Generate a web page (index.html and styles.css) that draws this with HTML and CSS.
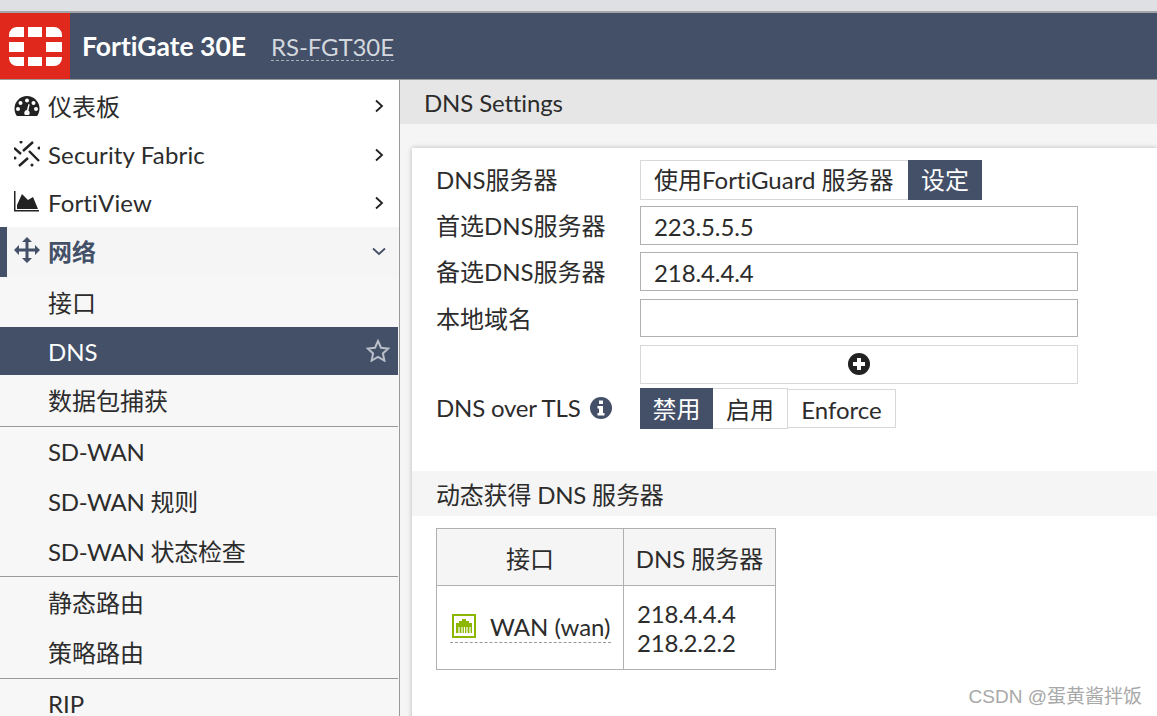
FILE: index.html
```html
<!DOCTYPE html>
<html lang="zh-CN">
<head>
  <meta charset="UTF-8" />
  <title>FortiGate 30E - DNS Settings</title>
  <link rel="stylesheet" href="styles.css">
</head>
<body>
  <div class="top-strip"></div>

  <!-- Header -->
  <header class="header">
    <div class="logo">
      <svg width="54" height="39" viewBox="0 0 54 39">
        <path fill="#fff" d="M1 10V8a8 8 0 0 1 8-8h7v10zM20 0h14v10H20zM38 0h8a8 8 0 0 1 8 8v2H38zM1 15h15v10H1zM38 15h16v10H38zM1 30h15v9H9a8 8 0 0 1-8-8zM20 30h14v9H20zM38 30h16v1a8 8 0 0 1-8 8h-8z"/>
      </svg>
    </div>
    <span class="device-name">FortiGate 30E</span>
    <span class="host-name">RS-FGT30E</span>
  </header>

  <div class="layout">
    <!-- Sidebar -->
    <nav class="sidebar">
      <div class="nav-top">
        <a class="nav-item">
          <svg class="nav-icon" viewBox="0 0 26 22">
            <path fill="#222" fill-rule="evenodd" d="M13 1a12.500 12.500 0 0 0-12.500 12.500c0 2.700.8 5 2 7 .3.400.7.500 1.100.500h18.800c.4 0 .8-.1 1.100-.5 1.200-2 2-4.300 2-7A12.500 12.500 0 0 0 13 1zM13 3.500a2 2 0 1 1 0 4 2 2 0 0 1 0-4zM6.500 6a2 2 0 1 1 0 4 2 2 0 0 1 0-4zM19.500 6a2 2 0 1 1 0 4 2 2 0 0 1 0-4zM4 12a2 2 0 1 1 0 4 2 2 0 0 1 0-4zM22 12a2 2 0 1 1 0 4 2 2 0 0 1 0-4zM14.500 9l1.200.4-1.300 6.200a3 3 0 0 1 1.300 2.400c0 .7-.3 1.400-.7 2h-4a3 3 0 0 1 1.900-5z"/>
          </svg>
          <span>仪表板</span>
          <svg class="chevron" viewBox="0 0 10 14"><path d="M2 1.500 8 7l-6 5.500"/></svg>
        </a>
        <a class="nav-item">
          <svg class="nav-icon" viewBox="4 3 26 26">
            <path stroke="#222" stroke-width="2.400" fill="none" d="M13 13 23 4M4 10l7 6M19 13l10 10M9 28l9-8"/>
            <g fill="#222">
              <circle cx="11" cy="4" r="1.500"/>
              <circle cx="29" cy="10" r="1.500"/>
              <circle cx="5" cy="20" r="1.500"/>
              <circle cx="22" cy="27" r="1.500"/>
            </g>
          </svg>
          <span class="wide-text">Security Fabric</span>
          <svg class="chevron" viewBox="0 0 10 14"><path d="M2 1.500 8 7l-6 5.500"/></svg>
        </a>
        <a class="nav-item">
          <svg class="nav-icon" viewBox="0 0 26 22">
            <path fill="#222" d="M0 0h1.500v19H25v1.500H0z"/>
            <path fill="#222" d="M3 18v-4L8 3l6 6 5-3 5 12z"/>
          </svg>
          <span class="wide-text">FortiView</span>
          <svg class="chevron" viewBox="0 0 10 14"><path d="M2 1.500 8 7l-6 5.500"/></svg>
        </a>
      </div>

      <div class="nav-rest">
        <a class="nav-item nav-open">
          <svg class="nav-icon" viewBox="0 0 26 26">
            <path fill="#435068" d="M13 0l5 5h-3.500v6.500H21V8l5 5-5 5v-3.500h-6.500V21H18l-5 5-5-5h3.500v-6.500H5V18l-5-5 5-5v3.500h6.500V5H8z"/>
          </svg>
          <span>网络</span>
          <svg class="chevron chevron-down" viewBox="0 0 14 9"><path d="M1 1.500 7 7l6-5.500"/></svg>
        </a>

        <div class="nav-group nav-group-first">
          <a class="nav-sub">接口</a>
          <a class="nav-sub nav-active">
            <span>DNS</span>
            <svg class="star" viewBox="0 0 24 23"><path d="M12 2l3 6.700 7.300.8-5.400 4.900 1.500 7.200L12 17.900l-6.400 3.700 1.500-7.200L1.700 9.500 9 8.700z"/></svg>
          </a>
          <a class="nav-sub">数据包捕获</a>
        </div>
        <div class="nav-group">
          <a class="nav-sub"><span class="tight-text">SD-WAN</span></a>
          <a class="nav-sub nav-sub-short"><span class="tight-text">SD-WAN 规则</span></a>
          <a class="nav-sub"><span class="tight-text">SD-WAN 状态检查</span></a>
        </div>
        <div class="nav-group nav-group-pad">
          <a class="nav-sub">静态路由</a>
          <a class="nav-sub">策略路由</a>
        </div>
        <div class="nav-group">
          <a class="nav-sub">RIP</a>
        </div>
      </div>
    </nav>

    <!-- Main -->
    <main class="main">
      <div class="page-title">DNS Settings</div>
      <div class="card">
        <div class="form">
          <label class="form-label">DNS服务器</label>
          <div class="btn-group">
            <span class="btn-option">使用FortiGuard 服务器</span>
            <span class="btn-selected">设定</span>
          </div>

          <label class="form-label">首选DNS服务器</label>
          <div class="text-field">223.5.5.5</div>

          <label class="form-label">备选DNS服务器</label>
          <div class="text-field">218.4.4.4</div>

          <label class="form-label">本地域名</label>
          <div class="text-field text-field-short"></div>

          <div></div>
          <div class="add-row">
            <svg width="22" height="22" viewBox="0 0 22 22">
              <circle cx="11" cy="11" r="11" fill="#222"/>
              <path fill="#fff" d="M9 5h4v4h4v4h-4v4H9v-4H5V9h4z"/>
            </svg>
          </div>

          <label class="form-label tls-label">DNS over TLS
            <svg class="info-icon" width="22" height="22" viewBox="0 0 22 22">
              <circle cx="11" cy="11" r="11" fill="#435068"/>
              <path fill="#fff" d="M9 3.500h4v3.500H9zM7.500 9H13v7h1.500v2.500h-7V16H9v-4.500H7.500z"/>
            </svg>
          </label>
          <div class="toggle-group">
            <span class="toggle toggle-on">禁用</span>
            <span class="toggle toggle-mid">启用</span>
            <span class="toggle toggle-end">Enforce</span>
          </div>
        </div>

        <div class="section-title">动态获得 DNS 服务器</div>

        <table class="dns-table">
          <thead>
            <tr>
              <th class="col-iface">接口</th>
              <th class="col-dns">DNS 服务器</th>
            </tr>
          </thead>
          <tbody>
            <tr>
              <td>
                <span class="iface-link">
                  <svg class="port-icon" width="24" height="24" viewBox="0 0 24 24">
                    <rect x="1" y="1" width="22" height="22" fill="#fff" stroke="#8db600" stroke-width="2"/>
                    <path fill="#8db600" d="M4 19V9h3V7h3V5h4v2h3v2h3v10z"/>
                    <path stroke="#fff" stroke-width="1.200" d="M7 13v6M10 13v6M12.500 13v6M15 13v6M18 13v6"/>
                  </svg>
                  WAN (wan)
                </span>
              </td>
              <td class="dns-values">218.4.4.4<br>218.2.2.2</td>
            </tr>
          </tbody>
        </table>
      </div>
    </main>
  </div>

  <div class="watermark">CSDN @蛋黄酱拌饭</div>
</body>
</html>
```

FILE: styles.css
```css
* {
  box-sizing: border-box;
}

html, body {
  height: 716px;
  overflow: hidden;
}

body {
  margin: 0;
  position: relative;
  background: #f5f5f5;
  color: #2c2c2c;
  font-family: Lato, "Noto Sans CJK SC", sans-serif;
  font-size: 24px;
  font-variant-ligatures: none;
}

.top-strip {
  height: 13px;
  background: #dfe0e4;
  border-bottom: 2px solid #a3a5a8;
}

.header {
  height: 67px;
  display: flex;
  align-items: center;
  background: #435068;
  border-bottom: 1px solid #9a9a9a;
}

.logo {
  width: 70px;
  height: 66px;
  padding: 14px 0 0 8px;
  background: #e0281c;
  margin-right: 12px;
}

.logo svg {
  display: block;
}

.device-name {
  color: #fff;
  font-size: 26.5px;
  font-weight: 700;
  margin-right: 25px;
}

.host-name {
  color: #d3d7de;
  border-bottom: 1px dashed #a9afba;
  line-height: 26px;
  margin-top: 2px;
  letter-spacing: -0.1px;
}

.layout {
  display: flex;
  height: 636px;
}

/* Sidebar */
.sidebar {
  width: 400px;
  flex-shrink: 0;
  padding-right: 1px;
  border-right: 1px solid #999;
  background: #f7f7f7;
}

.nav-top {
  background: #fff;
  padding-top: 2px;
  margin-right: -1px;
}

.nav-item {
  height: 48px;
  display: flex;
  align-items: center;
  padding: 0 14px 2px;
  position: relative;
}

.nav-item:first-child {
  height: 49px;
}

.nav-icon {
  width: 26px;
  height: 26px;
  margin-right: 8px;
  flex-shrink: 0;
}

.wide-text {
  letter-spacing: 0.15px;
}

.tight-text {
  letter-spacing: -0.25px;
}

.chevron {
  position: absolute;
  right: 15px;
  top: 17px;
  width: 10px;
  height: 14px;
  fill: none;
  stroke: #222;
  stroke-width: 1.800;
}

.nav-rest .chevron-down {
  right: 12px;
  top: 20px;
  width: 14px;
  height: 9px;
  stroke: #435068;
}

.nav-open,
.nav-item.nav-open:first-child {
  height: 50px;
  padding-left: 7px;
  padding-bottom: 4px;
  background: #f5f5f5;
  border-left: 7px solid #435068;
  color: #435068;
  font-weight: 700;
}

.nav-group {
  border-top: 1px solid #999;
}

.nav-group-first {
  border-top: 0;
  padding-bottom: 1px;
}

.nav-group-pad {
  padding-bottom: 1px;
}

.nav-sub {
  height: 50px;
  display: flex;
  align-items: center;
  padding: 0 0 2px 48px;
  position: relative;
}

.nav-sub-short {
  height: 49px;
}

.nav-active {
  height: 48px;
  padding-bottom: 0;
  background: #435068;
  color: #fff;
}

.star {
  position: absolute;
  right: 8px;
  top: 12px;
  width: 24px;
  height: 23px;
  fill: none;
  stroke: #b9bec8;
  stroke-width: 2;
}

/* Main */
.main {
  flex: 1;
  min-width: 0;
}

.page-title {
  height: 44px;
  line-height: 45px;
  padding-left: 24px;
  background: #e6e6e6;
  letter-spacing: -0.15px;
}

.card {
  margin: 24px 0 0 12px;
  height: 600px;
  padding-top: 12px;
  background: #fff;
  box-shadow: 0 0 5px rgba(0, 0, 0, 0.25);
}

.form {
  display: grid;
  grid-template-columns: 204px 438px;
  grid-template-rows: 46px 46px 47px 46px 43px 41px;
  margin-left: 24px;
}

.form-label {
  line-height: 40px;
  white-space: nowrap;
}

.tls-label {
  letter-spacing: -0.2px;
}

.btn-group {
  display: flex;
  height: 40px;
}

.btn-option {
  width: 268px;
  line-height: 38px;
  padding-left: 13px;
  border: 1px solid #d8d8d8;
  border-right: 0;
  white-space: nowrap;
}

.btn-selected {
  width: 74px;
  line-height: 40px;
  text-align: center;
  background: #435068;
  color: #fff;
}

.text-field {
  height: 39px;
  line-height: 39px;
  padding-left: 13px;
  border: 1px solid #b0b0b0;
  letter-spacing: -0.1px;
}

.text-field-short {
  height: 38px;
}

.add-row {
  height: 39px;
  display: flex;
  align-items: center;
  justify-content: center;
  padding-bottom: 2px;
  border: 1px solid #d8d8d8;
}

.info-icon {
  vertical-align: -2px;
  margin-left: 4px;
}

.toggle-group {
  display: flex;
  align-items: center;
  height: 41px;
}

.toggle {
  text-align: center;
  white-space: nowrap;
}

.toggle-on {
  width: 73px;
  height: 41px;
  line-height: 42px;
  background: #435068;
  color: #fff;
}

.toggle-mid {
  width: 75px;
  height: 41px;
  line-height: 41px;
  border: 1px solid #d8d8d8;
  border-left: 0;
}

.toggle-end {
  width: 108px;
  height: 39px;
  line-height: 39px;
  border: 1px solid #d8d8d8;
  border-left: 0;
}

.section-title {
  height: 45px;
  line-height: 47px;
  margin-top: 42px;
  padding-left: 24px;
  background: #f5f5f5;
  letter-spacing: -0.2px;
}

.dns-table {
  margin: 12px 0 0 24px;
  width: 340px;
  table-layout: fixed;
  border-collapse: collapse;
}

.dns-table th, .dns-table td {
  border: 1px solid #b0b0b0;
  padding: 0;
}

.dns-table th {
  height: 57px;
  font-weight: 400;
  background: #f5f5f5;
}

.col-iface {
  width: 187px;
}

.dns-table td {
  height: 84px;
}

.iface-link {
  display: inline-flex;
  align-items: center;
  gap: 14px;
  margin-left: 13px;
  padding-left: 2px;
  line-height: 30px;
  white-space: nowrap;
  border-bottom: 1px dashed #999;
}

.port-icon {
  margin-top: -3px;
}

.dns-table .dns-values {
  padding-left: 13px;
  line-height: 29px;
  letter-spacing: -0.2px;
}

.watermark {
  position: absolute;
  right: 15px;
  bottom: 8px;
  color: #a8a8a8;
  font-family: "Liberation Sans", "Noto Sans CJK SC", sans-serif;
  font-size: 19px;
}
```
